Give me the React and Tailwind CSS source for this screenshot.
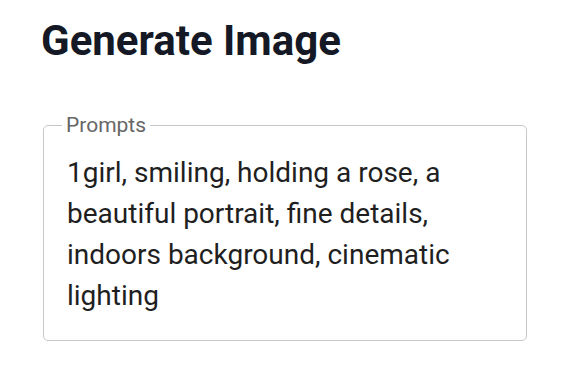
export default function App() {
  return (
    <div className="min-h-screen bg-white px-[43px] pt-[15px] font-['Roboto','Liberation_Sans',sans-serif]">
      <h1 className="text-[42px] font-bold leading-[52px] text-[#141925] -ml-[2px]">Generate Image</h1>

      <fieldset className="mt-[45px] w-[484px] h-[229px] rounded-[5px] border border-[#c8c8c8] pl-[23px] pr-[20px]">
        <legend className="-ml-[5px] px-[4px] text-[21px] leading-[26px] text-[#666]">Prompts</legend>
        <p className="pt-[14px] text-[28px] leading-[41px] text-[#1f1f1f]">
          1girl, smiling, holding a rose, a beautiful portrait, fine details, indoors background, cinematic lighting
        </p>
      </fieldset>
    </div>
  )
}
